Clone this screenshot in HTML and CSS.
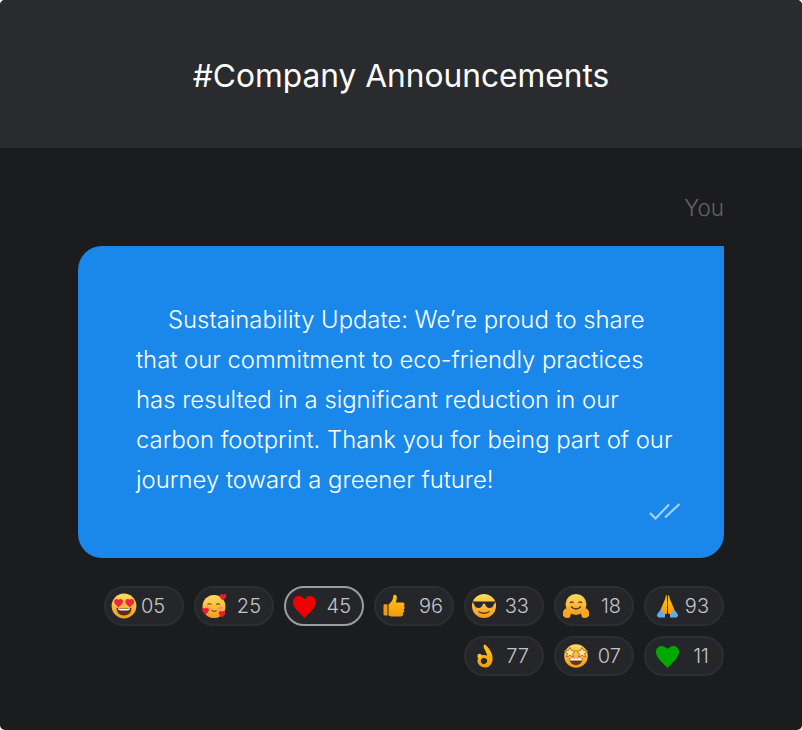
FILE: index.html
```html
<!DOCTYPE html>
<html lang="en">
<head>
    <meta charset="UTF-8">
    <meta name="viewport" content="width=device-width, initial-scale=1.0">
    <title>Company Announcements</title>
    <link rel="stylesheet" href="styles.css">
</head>
<body>
    <svg class="defs" aria-hidden="true">
        <defs>
            <linearGradient id="face" x1="0" y1="0" x2="0" y2="1">
                <stop offset="0" stop-color="#ffdc5e"/>
                <stop offset="1" stop-color="#f29a1f"/>
            </linearGradient>
            <linearGradient id="gold" x1="0" y1="0" x2="0" y2="1">
                <stop offset="0" stop-color="#ffc61a"/>
                <stop offset="1" stop-color="#f59a0c"/>
            </linearGradient>
            <path id="mini" d="M0 3.4C-1.3 2.3-3.4.9-3.4-1-3.4-2.3-2.4-3.1-1.4-3.1-.8-3.1-.3-2.8 0-2.2.3-2.8.8-3.1 1.4-3.1 2.4-3.1 3.4-2.3 3.4-1 3.4.9 1.3 2.3 0 3.4Z"/>
        </defs>
    </svg>

    <div class="card">
        <header class="channel">
            <h1>#Company Announcements</h1>
        </header>
        <main class="thread">
            <div class="sender">You</div>
            <div class="bubble">
                <p>Sustainability Update: We’re proud to share<br>that our commitment to eco-friendly practices<br>has resulted in a significant reduction in our<br>carbon footprint. Thank you for being part of our<br>journey toward a greener future!</p>
                <svg class="ticks" width="34" height="20" viewBox="0 0 34 20">
                    <path d="M2 11 7.5 16.5 21 2.5M17 15.5 31.5 2" fill="none" stroke="#a9d6fb" stroke-width="2"/>
                </svg>
            </div>
            <div class="reactions">
                <div class="chip chip-left">
                    <svg class="emoji" viewBox="0 0 28 26">
                        <circle cx="13" cy="13" r="12.4" fill="url(#face)"/>
                        <path d="M5.5 14.5C9 16 17 16 20.5 14.5 20.5 19.5 17.5 22.5 13 22.5 8.5 22.5 5.5 19.5 5.5 14.5Z" fill="#5a2c12"/>
                        <path d="M7 15.2C10 16.1 16 16.1 19 15.2L18.6 17C15.5 17.7 10.5 17.7 7.4 17Z" fill="#fff"/>
                        <use href="#mini" x="7.6" y="9.4" fill="#f0243a" transform="translate(-2.3 -2.3) scale(1.3)"/>
                        <use href="#mini" x="14.6" y="9.4" fill="#f0243a" transform="translate(-.3 -2.3) scale(1.3)"/>
                    </svg>
                    <span>05</span>
                </div>
                <div class="chip">
                    <svg class="emoji" viewBox="0 0 28 26">
                        <circle cx="13" cy="13.5" r="11.5" fill="url(#face)"/>
                        <path d="M6.5 11.5Q8.5 9.8 10.5 11.5M15 11.5Q17 9.8 19 11.5M10.5 17.5Q13 19.5 15.5 17.5" fill="none" stroke="#5a3512" stroke-width="1"/>
                        <ellipse cx="6.5" cy="15" rx="2.4" ry="1.6" fill="#f7926b"/>
                        <ellipse cx="19.5" cy="15" rx="2.4" ry="1.6" fill="#f7926b"/>
                        <use href="#mini" x="22" y="4" fill="#ea1c2f"/>
                        <use href="#mini" x="4.5" y="18" fill="#ea1c2f"/>
                        <use href="#mini" x="21" y="21" fill="#ea1c2f"/>
                    </svg>
                    <span>25</span>
                </div>
                <div class="chip chip-active">
                    <svg class="emoji" viewBox="0 0 28 26">
                        <path d="M13.5 25C9 20 2 15 2 9 2 5.5 4.5 3 7.8 3 10 3 12.3 4.2 13.5 6.5 14.7 4.2 17 3 19.2 3 22.5 3 25 5.5 25 9 25 15 18 20 13.5 25Z" fill="#f00000"/>
                    </svg>
                    <span>45</span>
                </div>
                <div class="chip chip-tight">
                    <svg class="emoji" viewBox="0 0 28 26">
                        <path d="M2.5 12.5C2.5 11.8 3 11.3 3.8 11.3H6.5V22.5H3.8C3 22.5 2.5 22 2.5 21.3Z" fill="#f59a0c"/>
                        <path d="M7.5 11.5C10 10 12.2 6.5 12.2 3.5 12.2 1 15.6 1 15.8 4 16 6 15.2 7.8 14.8 9.5H21.5C24 9.5 24 12.8 22.6 13 24.2 13.6 24 16.2 22.5 16.6 23.6 17.4 23.4 19.6 21.8 20 22.6 21 22 23.5 20 23.5H11C9.2 23.5 8.4 22.8 7.5 22.5Z" fill="url(#gold)"/>
                    </svg>
                    <span>96</span>
                </div>
                <div class="chip chip-wide">
                    <svg class="emoji" viewBox="0 0 28 26">
                        <circle cx="13" cy="13" r="12" fill="url(#face)"/>
                        <path d="M2 8.5H24V10.2L23 10.6C22.6 14 20.5 15 18.6 15 16 15 14.6 13.2 14 11 13.5 10.6 12.5 10.6 12 11 11.4 13.2 10 15 7.4 15 5.5 15 3.4 14 3 10.6L2 10.2Z" fill="#26282b"/>
                        <path d="M7.5 18.5Q13 22 18.5 18.5" fill="none" stroke="#5a3512" stroke-width="1.3"/>
                    </svg>
                    <span>33</span>
                </div>
                <div class="chip">
                    <svg class="emoji" viewBox="0 0 28 26">
                        <circle cx="15" cy="11.5" r="10.5" fill="url(#face)"/>
                        <path d="M9 10Q10.8 7.8 12.5 10M17.5 10Q19.2 7.8 21 10" fill="none" stroke="#5a3512" stroke-width="1.2"/>
                        <path d="M10 13.5Q15 18.5 20 13.5" fill="none" stroke="#5a3512" stroke-width="1.3"/>
                        <path d="M2 18.5 4 15.5 8 16.5 10 20 9 24.5 5 25 2 23ZM28 18.5 26 15.5 22 16.5 20 20 21 24.5 25 25 28 23Z" fill="#f7a823"/>
                    </svg>
                    <span>18</span>
                </div>
                <div class="chip chip-wide">
                    <svg class="emoji" viewBox="0 0 28 26">
                        <path d="M6 21.5 10.5 15.5 14 18 14 24.5H8C6.5 24.5 6 23 6 21.5ZM27 21.5 22.5 15.5 19 18 19 24.5H25C26.5 24.5 27 23 27 21.5Z" fill="#5dade8"/>
                        <path d="M15.8 2C14.8 2 14.8 3.5 14.2 6L9.8 16 13 21.5 16 20.5 16.2 11ZM17.2 2C18.2 2 18.2 3.5 18.8 6L23.2 16 20 21.5 17 20.5 16.8 11Z" fill="url(#gold)"/>
                    </svg>
                    <span>93</span>
                </div>
                <div class="chip chip-wide">
                    <svg class="emoji" viewBox="0 0 28 26">
                        <path d="M14 1.5C16.5 3.5 19.5 7 21 11.5 23 18 20 24.5 14.5 24.5 10 24.5 6 21.5 6.5 17 7 13.5 10 11.5 13.5 12 15 12.2 16.2 13 16.2 13 15.5 10 14.5 7.5 13 5.5 12.2 3 12.8 1.2 14 1.5ZM13.2 15C11 14.8 9.6 16.4 9.8 18.2 10 20.1 11.6 21.2 13.2 21 15 20.8 16.4 19.3 16.2 17.6 16 16 14.8 15.1 13.2 15Z" fill="url(#gold)" fill-rule="evenodd"/>
                        <circle cx="8.5" cy="13" r="2.2" fill="#ffc61a"/>
                    </svg>
                    <span>77</span>
                </div>
                <div class="chip">
                    <svg class="emoji" viewBox="0 0 28 26">
                        <circle cx="15" cy="13" r="11.8" fill="url(#face)"/>
                        <path d="M8.5 15H21.5C21.2 20 18.8 22 15 22 11.2 22 8.8 20 8.5 15Z" fill="#6b3413"/>
                        <path d="M9 15.2H21L20.7 17.5H9.3Z" fill="#fff"/>
                        <path d="M9 4.5 10.6 7.5 14.5 8 11.6 10.4 12.4 14 9 12.4 5.6 14 6.4 10.4 3.2 8 7.4 7.5ZM21 4.5 22.6 7.5 26.8 8 23.6 10.4 24.4 14 21 12.4 17.6 14 18.4 10.4 15.5 8 19.4 7.5Z" fill="#ffe9a0" stroke="#b9650c" stroke-width=".9"/>
                    </svg>
                    <span>07</span>
                </div>
                <div class="chip chip-wide">
                    <svg class="emoji" viewBox="0 0 28 26">
                        <path d="M16.5 25C12 20 5 15 5 9 5 5.5 7.5 3 10.8 3 13 3 15.3 4.2 16.5 6.5 17.7 4.2 20 3 22.2 3 25.5 3 28 5.5 28 9 28 15 21 20 16.5 25Z" fill="#00a800"/>
                    </svg>
                    <span>11</span>
                </div>
            </div>
        </main>
    </div>
</body>
</html>
```

FILE: styles.css
```css
html, body {
    margin: 0;
    background: #fff;
}
body {
    font-family: "Inter", "Liberation Sans", sans-serif;
}
.defs {
    position: absolute;
    width: 0;
    height: 0;
}
.card {
    height: 730px;
    border-radius: 5px;
    overflow: hidden;
    background: #1b1c1e;
}
.channel {
    height: 148px;
    background: #2a2b2f;
    display: flex;
    justify-content: center;
    align-items: center;
}
.channel h1 {
    margin: 2px 0 0;
    font-size: 31.7px;
    font-weight: 400;
    color: #fff;
}
.thread {
    padding: 44px 78px 0;
}
.sender {
    line-height: 32px;
    margin-bottom: 22px;
    text-align: right;
    font-size: 22.5px;
    font-weight: 300;
    color: #626366;
}
.bubble {
    background: #1a88ea;
    border-radius: 24px 0 24px 24px;
    padding: 54px 42px 36px 58px;
}
.bubble p {
    margin: 0;
    font-size: 23.85px;
    font-weight: 300;
    line-height: 40px;
    color: #fff;
    text-indent: 32px;
}
.ticks {
    display: block;
    margin: 2px 0 0 auto;
}
.reactions {
    margin-top: 28px;
    display: flex;
    flex-wrap: wrap;
    justify-content: flex-end;
    gap: 10px;
}
.chip {
    box-sizing: border-box;
    width: 80px;
    height: 40px;
    padding: 0 11px 0 5px;
    border: 2px solid #2d2e32;
    border-radius: 20px;
    background: #25262a;
    display: flex;
    align-items: center;
    justify-content: space-between;
    font-size: 20px;
    font-weight: 300;
    color: #c4c5c7;
}
.chip-left {
    justify-content: flex-start;
    gap: 2px;
}
.chip-active {
    border-color: #9c9d9f;
}
.chip-tight {
    padding-right: 9px;
}
.chip-wide {
    padding-right: 13px;
}
.emoji {
    width: 28px;
    height: 26px;
    flex: none;
}
```
